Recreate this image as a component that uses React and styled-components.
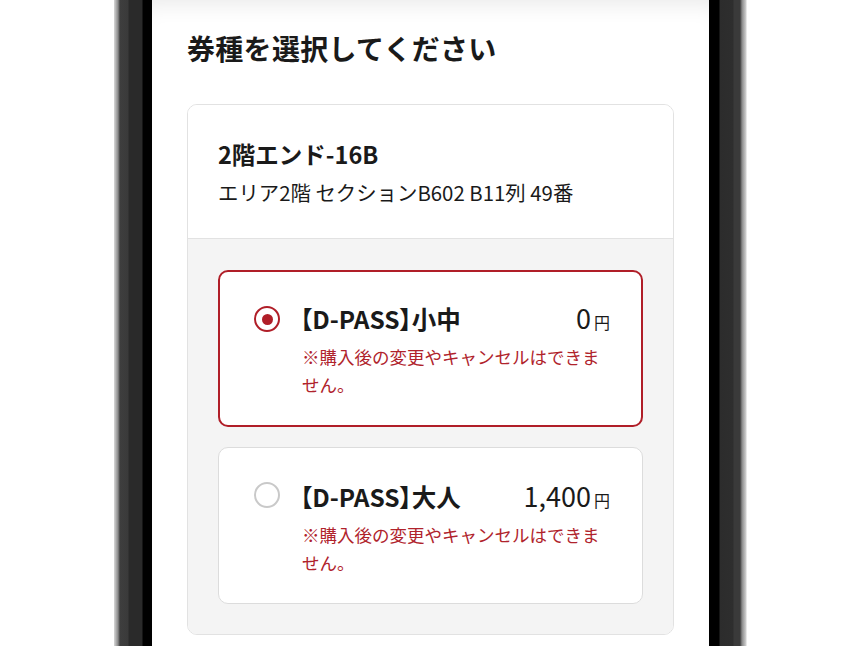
import styled, { createGlobalStyle } from 'styled-components';

const GlobalStyle = createGlobalStyle`
  html, body {
    margin: 0;
    padding: 0;
    background: #fff;
  }
  * {
    box-sizing: border-box;
  }
`;

const Stage = styled.div`
  width: 862px;
  height: 646px;
  overflow: hidden;
  display: flex;
  padding-left: 114px;
  font-family: "Noto Sans CJK JP", "Noto Sans", sans-serif;
  color: #1a1a1a;
`;

const Phone = styled.div`
  display: flex;
  height: 100%;
`;

const BezelLeft = styled.div`
  width: 38px;
  background: linear-gradient(
    to right,
    #d8d8d8 0px,
    #8a8a8a 4px,
    #3e3e3e 6px,
    #3a3a3a 14px,
    #2a2a2a 15px,
    #2a2a2a 28px,
    #000 29px,
    #000 38px
  );
`;

const BezelRight = styled.div`
  width: 38px;
  background: linear-gradient(
    to right,
    #000 0px,
    #000 10px,
    #2c2c2c 11px,
    #2e2e2e 24px,
    #3a3a3a 25px,
    #3a3a3a 31px,
    #8a8a8a 33px,
    #d0d0d0 37px,
    #fff 38px
  );
`;

const Screen = styled.div`
  width: 557px;
  background: #fff;
  padding: 26px 35px 0;
  box-shadow: inset 0 18px 22px -14px rgba(0, 0, 0, 0.09);
`;

const Heading = styled.h1`
  margin: 0 0 34px;
  font-size: 28px;
  line-height: 44px;
  font-weight: 700;
  letter-spacing: 0.3px;
`;

const Card = styled.div`
  border: 1px solid #e2e2e2;
  border-radius: 10px;
  overflow: hidden;
`;

const SeatInfo = styled.div`
  padding: 33px 30px 30px;
  border-bottom: 1px solid #e2e2e2;
  background: #fff;
`;

const SeatName = styled.div`
  font-size: 23.5px;
  font-weight: 700;
  line-height: 32px;
`;

const SeatDetail = styled.div`
  margin-top: 6px;
  font-size: 20.4px;
  line-height: 32px;
`;

const Options = styled.div`
  background: #f4f4f4;
  padding: 31px 30px 30px;
  display: flex;
  flex-direction: column;
  gap: 20px;
`;

const Option = styled.label`
  display: grid;
  grid-template-columns: 26px 1fr;
  column-gap: 20px;
  height: 157px;
  padding: ${p => (p.$selected ? '31px 31px 0 34px' : '33px 32px 0 35px')};
  background: #fff;
  border: ${p => (p.$selected ? '2.5px solid #b01e28' : '1px solid #dcdcdc')};
  border-radius: 10px;
`;

const Radio = styled.span`
  width: 26px;
  height: 26px;
  margin-top: ${p => (p.$checked ? 3 : 1)}px;
  border-radius: 50%;
  border: 2.5px solid ${p => (p.$checked ? '#b01e28' : '#c9c9c9')};
  display: flex;
  align-items: center;
  justify-content: center;

  &::after {
    content: '';
    width: 11px;
    height: 11px;
    border-radius: 50%;
    background: ${p => (p.$checked ? '#b01e28' : 'transparent')};
  }
`;

const OptionBody = styled.div`
  display: flex;
  flex-direction: column;
`;

const OptionHead = styled.div`
  display: flex;
  justify-content: space-between;
  align-items: baseline;
`;

const OptionName = styled.span`
  font-size: 24.5px;
  font-weight: 700;
  line-height: 30px;
  font-feature-settings: "palt";
`;

const Price = styled.span`
  font-size: 27px;
  line-height: 30px;
`;

const Yen = styled.span`
  margin-left: 3px;
  font-size: 16px;
`;

const Note = styled.p`
  margin: 6px 0 0 2px;
  font-size: 17.5px;
  line-height: 28px;
  color: #b0232c;
`;

const tickets = [
  { name: '【D-PASS】小中', price: '0', selected: true },
  { name: '【D-PASS】大人', price: '1,400', selected: false },
];

export default function App() {
  return (
    <>
      <GlobalStyle />
      <Stage>
        <Phone>
          <BezelLeft />
          <Screen>
            <Heading>券種を選択してください</Heading>
            <Card>
              <SeatInfo>
                <SeatName>2階エンド-16B</SeatName>
                <SeatDetail>エリア2階 セクションB602 B11列 49番</SeatDetail>
              </SeatInfo>
              <Options>
                {tickets.map(t => (
                  <Option key={t.name} $selected={t.selected}>
                    <Radio $checked={t.selected} />
                    <OptionBody>
                      <OptionHead>
                        <OptionName>{t.name}</OptionName>
                        <Price>
                          {t.price}
                          <Yen>円</Yen>
                        </Price>
                      </OptionHead>
                      <Note>※購入後の変更やキャンセルはできません。</Note>
                    </OptionBody>
                  </Option>
                ))}
              </Options>
            </Card>
          </Screen>
          <BezelRight />
        </Phone>
      </Stage>
    </>
  );
}
